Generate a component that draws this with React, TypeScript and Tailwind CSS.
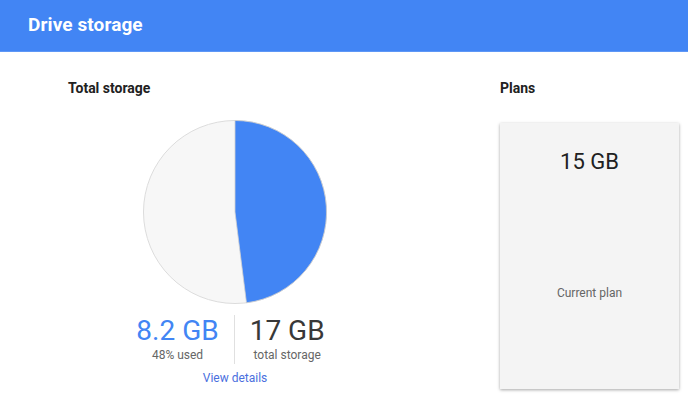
import React from "react";

export default function App() {
  const cx = 93, cy = 93, r = 92;
  const pct = 0.48;
  const a = pct * 2 * Math.PI;
  const ex = cx + r * Math.sin(a);
  const ey = cy - r * Math.cos(a);
  return (
    <div className="w-[688px] h-[403px] bg-white overflow-hidden" style={{ fontFamily: "Roboto, 'Liberation Sans', sans-serif" }}>
      <div className="h-[52px] bg-[#4285f4] border-b border-[#5e97f6] flex items-center px-[28px]">
        <span className="text-white text-[19px] font-bold tracking-[0.1px]">Drive storage</span>
      </div>
      <div className="flex pt-[26px]">
        <div className="w-[334px] ml-[68px] flex flex-col">
          <div className="text-[14px] leading-[20px] font-bold text-[#212121]">Total storage</div>
          <div className="flex justify-center mt-[21px]">
            <svg width="186" height="186" viewBox="-0.5 -0.5 187 187">
              <circle cx={cx} cy={cy} r={r} fill="#f7f7f7" stroke="#dcdcdc" strokeWidth="1" />
              <path d={`M${cx} ${cy} L${cx} ${cy - r} A${r} ${r} 0 0 1 ${ex} ${ey} Z`} fill="#4285f4" stroke="#d0d0d0" strokeWidth="0.8" />
            </svg>
          </div>
          <div className="flex justify-center mt-[10px] pr-[9px]">
            <div className="flex flex-col items-center pr-[15px] border-r border-[#e0e0e0]">
              <div className="text-[28px] leading-[32px] text-[#4285f4]">8.2 GB</div>
              <div className="text-[12px] leading-[17px] text-[#666]">48% used</div>
            </div>
            <div className="flex flex-col items-center pl-[15px]">
              <div className="text-[28px] leading-[32px] text-[#383838]">17 GB</div>
              <div className="text-[12px] leading-[17px] text-[#666]">total storage</div>
            </div>
          </div>
          <div className="text-center mt-[6px] text-[12px] leading-[16px] text-[#4a6fde]">View details</div>
        </div>
        <div className="ml-[98px] flex flex-col">
          <div className="text-[14px] leading-[20px] font-bold text-[#212121]">Plans</div>
          <div className="mt-[25px] w-[179px] h-[266px] bg-[#f4f4f4] shadow-[0_1px_3px_rgba(0,0,0,0.35)] flex flex-col items-center">
            <div className="mt-[25px] text-[22px] leading-[28px] text-[#212121]">15 GB</div>
            <div className="mt-[109px] text-[12px] leading-[16px] text-[#666]">Current plan</div>
          </div>
        </div>
      </div>
    </div>
  );
}
